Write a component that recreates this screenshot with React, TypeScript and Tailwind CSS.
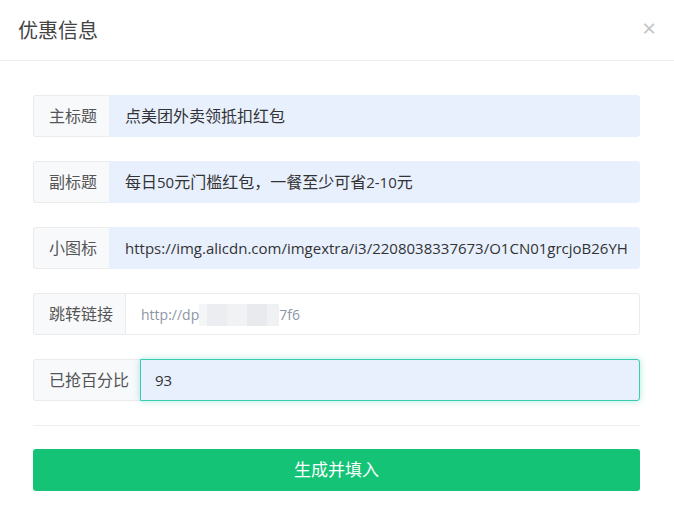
const font = { fontFamily: '"Open Sans", "Noto Sans CJK SC", sans-serif' };

// CJK runs render at 16px, latin runs at 15px (closer to the original widths)
function Mixed({ text }: { text: string }) {
  const parts = text.split(/([\u3000-\u9fff\uff00-\uffef]+)/).filter(Boolean);
  return (
    <>
      {parts.map((p, i) =>
        /[\u3000-\u9fff\uff00-\uffef]/.test(p) ? (
          <span key={i} className="text-[16px]">{p}</span>
        ) : (
          <span key={i} className="text-[15px]">{p}</span>
        ),
      )}
    </>
  );
}

function Row({
  label,
  value,
  labelW,
  variant = 'filled',
  children,
}: {
  label: string;
  value?: string;
  labelW: string;
  variant?: 'filled' | 'plain' | 'focus';
  children?: React.ReactNode;
}) {
  const inputCls =
    variant === 'focus'
      ? 'bg-[#e8f0fe] border-[#3ccbb2] shadow-[0_0_6px_rgba(60,203,178,0.45)] text-[#333] pl-[14px]'
      : variant === 'plain'
        ? 'bg-white border-[#ebebeb] text-[#8c96a6] pl-[15px]'
        : 'bg-[#e8f0fe] border-[#e8f0fe] text-[#333] pl-[15px]';
  return (
    <div className="flex h-[42px]">
      <div
        className={`${labelW} flex items-center shrink-0 pl-[15px] bg-[#f8f9fb] border border-r-0 border-[#ebebeb] rounded-l-[3px] text-[#555] text-[16px]`}
      >
        {label}
      </div>
      <div
        className={`flex-1 flex items-center min-w-0 overflow-hidden whitespace-nowrap pr-[15px] border rounded-r-[3px] ${inputCls}`}
      >
        {children ?? <Mixed text={value ?? ''} />}
      </div>
    </div>
  );
}

export default function App() {
  return (
    <div className="w-[674px] h-[518px] bg-white" style={font}>
      <div className="h-[61px] flex items-center justify-between pl-[18px] pr-[18px] border-b border-[#eeeeee]">
        <h3 className="text-[20px] text-[#444] font-normal mt-[2px]">优惠信息</h3>
        <span className="text-[24px] leading-none text-[#c4c4c4] -mt-[4px]">×</span>
      </div>
      <div className="pl-[33px] pr-[34px] pt-[34px]">
        <div className="flex flex-col gap-[24px]">
          <Row label="主标题" labelW="w-[76px]" value="点美团外卖领抵扣红包" />
          <Row label="副标题" labelW="w-[76px]" value="每日50元门槛红包，一餐至少可省2-10元" />
          <Row
            label="小图标"
            labelW="w-[76px]"
            value="https://img.alicdn.com/imgextra/i3/2208038337673/O1CN01grcjoB26YH"
          />
          <Row label="跳转链接" labelW="w-[92px]" variant="plain">
            <span className="text-[14px]">http://dp</span>
            <span className="flex h-[22px] w-[80px] mt-[1px]">
              <span className="w-[8px] bg-[#f4f5f7]" />
              <span className="w-[20px] bg-[#ebedf0]" />
              <span className="w-[20px] bg-[#f1f2f4]" />
              <span className="w-[20px] bg-[#e9eaed]" />
              <span className="w-[12px] bg-[#f0f1f3]" />
            </span>
            <span className="text-[14px]">7f6</span>
          </Row>
          <Row label="已抢百分比" labelW="w-[107px]" variant="focus" value="93" />
        </div>
        <div className="mt-[24px] border-t border-[#f0f0f0]" />
        <button className="mt-[23px] w-full h-[42px] rounded-[3px] bg-[#15c377] text-white text-[17px]">
          生成并填入
        </button>
      </div>
    </div>
  );
}
